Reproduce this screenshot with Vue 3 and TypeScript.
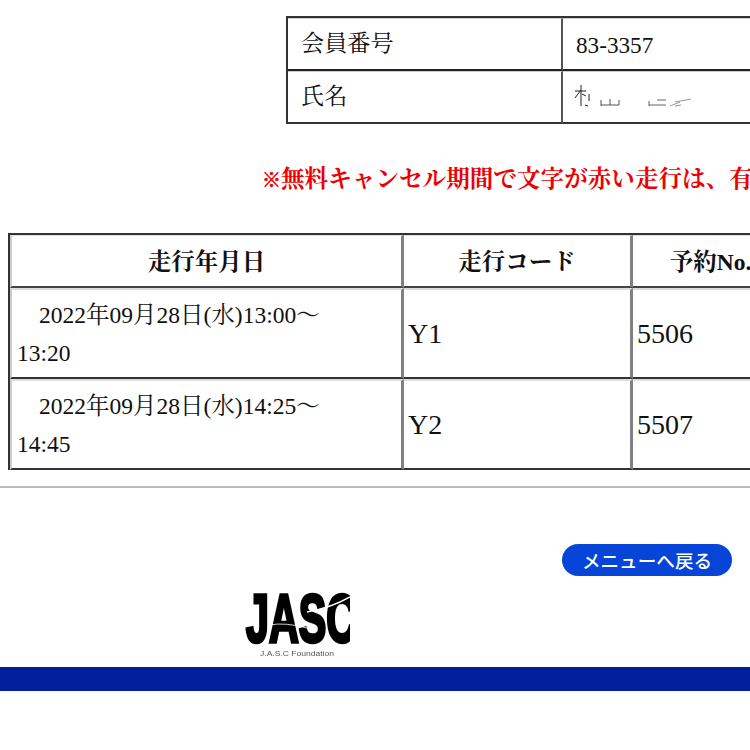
<script setup lang="ts">
interface Run { date: string; end: string; code: string; no: string }
const runs: Run[] = [
  { date: '2022年09月28日(水)13:00～', end: '13:20', code: 'Y1', no: '5506' },
  { date: '2022年09月28日(水)14:25～', end: '14:45', code: 'Y2', no: '5507' },
]
</script>

<template>
  <div class="page">
    <table class="member">
      <tbody>
        <tr>
          <th>会員番号</th>
          <td>83-3357</td>
        </tr>
        <tr>
          <th>氏名</th>
          <td>
            <svg class="redacted" width="120" height="30" viewBox="0 0 120 30" aria-hidden="true">
              <g stroke="#222" stroke-width="1" fill="none">
                <path d="M1 9h11M7 3v21M7 8l-6 8M8 12l4 2M11 23l3 1M15 12v7" />
                <path d="M27 18v6M27 23h18M36 17v6M45 18v5" stroke="#555" />
                <path d="M75 19v5M75 23h17M83 18h9" stroke="#666" />
                <path d="M96 24l10-4M101 20l16-3M101 24l6-1" stroke="#999" />
              </g>
            </svg>
          </td>
        </tr>
      </tbody>
    </table>

    <p class="notice"><span class="mark">※</span>無料キャンセル期間で文字が赤い走行は、有料キャンセルとなります。</p>

    <table class="runs">
      <thead>
        <tr>
          <th class="c1">走行年月日</th>
          <th class="c2">走行コード</th>
          <th class="c3">予約No.</th>
        </tr>
      </thead>
      <tbody>
        <tr v-for="r in runs" :key="r.no">
          <td class="date"><span class="indent">{{ r.date }}</span><br />{{ r.end }}</td>
          <td class="big">{{ r.code }}</td>
          <td class="big">{{ r.no }}</td>
        </tr>
      </tbody>
    </table>

    <hr class="rule" />

    <div class="actions">
      <a class="back">メニューへ戻る</a>
    </div>

    <svg class="logo" width="105" height="66" viewBox="0 0 105 66" role="img" aria-label="JASC">
      <text x="1" y="50" class="logo-mark" textLength="110" lengthAdjust="spacingAndGlyphs">JASC</text>
      <path d="M62 20Q86 16 105 5" stroke="#fff" stroke-width="1.5" fill="none" />
      <path d="M24 33Q40 30 62 36" stroke="#fff" stroke-width="0.8" fill="none" />
      <text x="15" y="63.5" class="logo-sub" textLength="74" lengthAdjust="spacingAndGlyphs">J.A.S.C Foundation</text>
    </svg>

    <div class="bar"></div>
  </div>
</template>

<style>
html, body { margin: 0; overflow: hidden; background: #fff; }
</style>

<style scoped>
.page {
  width: 750px;
  height: 750px;
  overflow: hidden;
  padding-top: 16px;
  box-sizing: border-box;
  font-family: "Liberation Serif", "Noto Serif CJK JP", "Noto Sans CJK JP", serif;
  color: #111;
}
table { border-collapse: separate; border-spacing: 0; table-layout: fixed; }
.member {
  margin-left: 286px;
  width: 520px;
  border-top: 2px solid #333;
  border-left: 2px solid #333;
}
.member th, .member td {
  height: 53px;
  padding: 0 0 0 13px;
  box-sizing: border-box;
  font-size: 23.2px;
  font-weight: 400;
  text-align: left;
  border-top: 1px solid #ccc;
  border-bottom: 2px solid #333;
  border-right: 2px solid #555;
}
.member tr:first-child th, .member tr:first-child td { border-bottom: 2px solid #222; }
.member th { width: 275px; padding-bottom: 6px; }
.member tr:first-child td { padding-top: 2px; }
.redacted { display: block; margin-left: -2px; }
.notice {
  margin: 36px 0 0 262px;
  white-space: nowrap;
  font-size: 23.6px;
  line-height: 38px;
  font-weight: 700;
  color: #ee0000;
}
.mark {
  font-family: "Noto Sans CJK JP", sans-serif;
  font-weight: 900;
  font-size: 19px;
  -webkit-text-stroke: 0.6px #ee0000;
}
.runs {
  margin: 35px 0 0 8px;
  width: 900px;
  border-top: 2px solid #333;
  border-left: 2px solid #333;
}
.runs th, .runs td {
  box-sizing: border-box;
  border-bottom: 2px solid #333;
  border-right: 3px solid #808080;
  text-align: left;
}
.runs th:first-child, .runs td:first-child { border-left: 2px solid #ccc; }
.runs th {
  height: 53px;
  padding-bottom: 4px;
  font-size: 23.5px;
  text-align: center;
  border-top: 1px solid #ddd;
  border-bottom: 2px solid #444;
}
.c1 { width: 394px; }
.c2 { width: 229px; }
.c3 { width: 277px; padding-right: 120px; white-space: nowrap; }
.runs td { height: 91px; padding: 0 4px; border-top: 2px solid #ddd; }
.date { font-size: 23.5px; line-height: 38px; padding-left: 5px !important; }
.indent { padding-left: 22px; }
.big { font-size: 28px; }
.rule {
  margin: 16px 0 0;
  height: 2px;
  border: none;
  background: #bbb;
}
.actions {
  margin: 56px 18px 0 0;
  display: flex;
  justify-content: flex-end;
}
.back {
  width: 170px;
  height: 32px;
  border-radius: 16px;
  background: #0645d8;
  color: #fff;
  font-family: "Noto Sans CJK JP", sans-serif;
  font-size: 18.6px;
  font-weight: 500;
  line-height: 32px;
  text-align: center;
}
.logo { display: block; margin: 16px 0 0 245px; filter: blur(0.4px); }
.logo-mark {
  font-family: "Liberation Sans", sans-serif;
  font-weight: 700;
  font-size: 68px;
  fill: #000;
  stroke: #000;
  stroke-width: 3.5px;
}
.logo-sub {
  font-family: "Liberation Sans", sans-serif;
  font-size: 7px;
  fill: #555;
}
.bar { margin-top: 9px; height: 24px; background: #001f9c; }
</style>
